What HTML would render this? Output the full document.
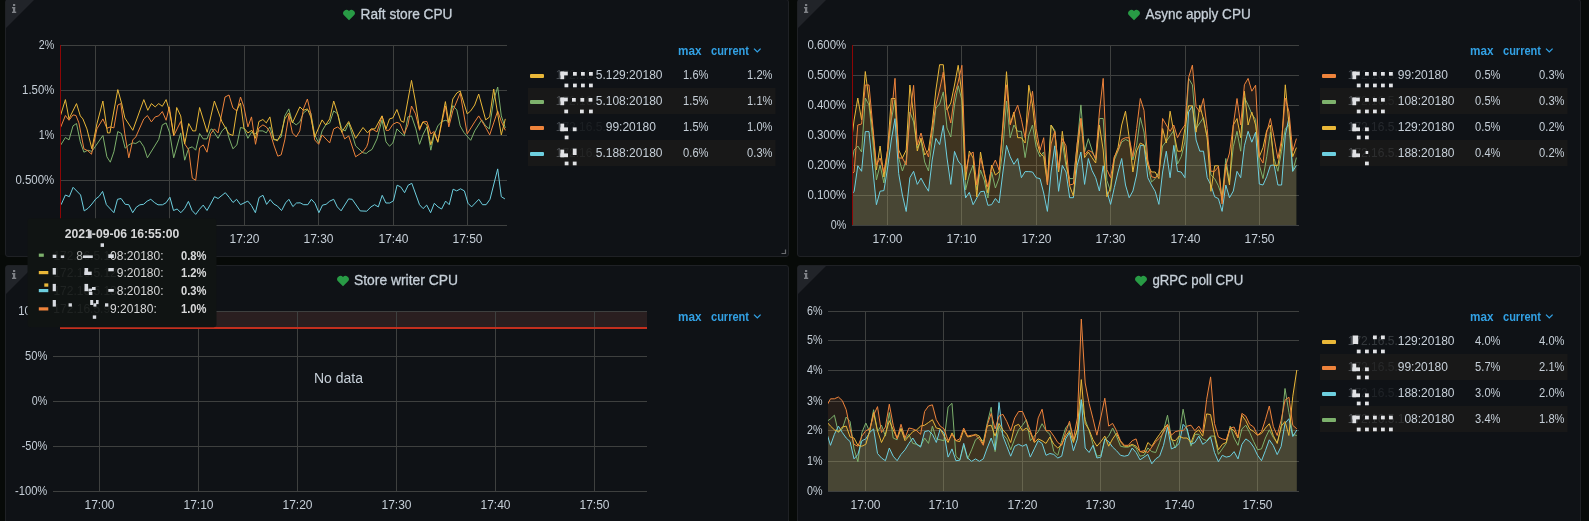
<!DOCTYPE html>
<html><head><meta charset="utf-8"><title>TiKV CPU</title>
<style>
html,body{margin:0;padding:0;background:#080b09;overflow:hidden}
svg{display:block;font-family:"Liberation Sans",sans-serif;will-change:transform;opacity:.999}
</style></head><body>
<svg width="1589" height="521" viewBox="0 0 1589 521">
<defs><clipPath id="cl1"><rect x="60" y="40" width="447" height="186"/></clipPath><clipPath id="cl2"><rect x="852" y="40" width="447" height="185"/></clipPath><clipPath id="cl4"><rect x="828" y="306" width="471" height="185"/></clipPath></defs>
<rect width="1589" height="521" fill="#080b09"/>
<rect x="5.5" y="-0.5" width="783" height="257" rx="2.5" fill="#101317" stroke="#202226"/>
<path d="M6 0h28l-28 28z" fill="#22252a"/>
<g fill="#7e8186"><rect x="13" y="4" width="2.2" height="2"/><rect x="12" y="7" width="3.2" height="1.4"/><rect x="13" y="7" width="2.2" height="5"/><rect x="12" y="11.6" width="4.2" height="1.4"/></g>
<rect x="797.5" y="-0.5" width="783" height="257" rx="2.5" fill="#101317" stroke="#202226"/>
<path d="M798 0h28l-28 28z" fill="#22252a"/>
<g fill="#7e8186"><rect x="805" y="4" width="2.2" height="2"/><rect x="804" y="7" width="3.2" height="1.4"/><rect x="805" y="7" width="2.2" height="5"/><rect x="804" y="11.6" width="4.2" height="1.4"/></g>
<rect x="5.5" y="265.5" width="783" height="269" rx="2.5" fill="#101317" stroke="#202226"/>
<path d="M6 266h28l-28 28z" fill="#22252a"/>
<g fill="#7e8186"><rect x="13" y="270" width="2.2" height="2"/><rect x="12" y="273" width="3.2" height="1.4"/><rect x="13" y="273" width="2.2" height="5"/><rect x="12" y="277.6" width="4.2" height="1.4"/></g>
<rect x="797.5" y="265.5" width="783" height="269" rx="2.5" fill="#101317" stroke="#202226"/>
<path d="M798 266h28l-28 28z" fill="#22252a"/>
<g fill="#7e8186"><rect x="805" y="270" width="2.2" height="2"/><rect x="804" y="273" width="3.2" height="1.4"/><rect x="805" y="273" width="2.2" height="5"/><rect x="804" y="277.6" width="4.2" height="1.4"/></g>
<path transform="translate(343,10)" d="M6 10.2 L1 5.3 A3.25 3.25 0 0 1 6 1.0 A3.25 3.25 0 0 1 11 5.3 Z" fill="#299c46"/>
<text x="360.5" y="19.2" font-size="14" font-weight="400" fill="#c7d0d9" textLength="92" lengthAdjust="spacingAndGlyphs" stroke="#c7d0d9" stroke-width="0.3">Raft store CPU</text>
<rect x="95" y="45" width="1" height="181" fill="#3f4140"/>
<rect x="169" y="45" width="1" height="181" fill="#3f4140"/>
<rect x="244" y="45" width="1" height="181" fill="#3f4140"/>
<rect x="318" y="45" width="1" height="181" fill="#3f4140"/>
<rect x="393" y="45" width="1" height="181" fill="#3f4140"/>
<rect x="467" y="45" width="1" height="181" fill="#3f4140"/>
<rect x="60" y="45" width="447" height="1" fill="#3f4140"/>
<rect x="60" y="90" width="447" height="1" fill="#3f4140"/>
<rect x="60" y="135" width="447" height="1" fill="#3f4140"/>
<rect x="60" y="180" width="447" height="1" fill="#3f4140"/>
<rect x="60" y="225" width="447" height="1" fill="#3f4140"/>
<text x="54.3" y="48.9" font-size="12" text-anchor="end" fill="#c7d0d9" textLength="15.5" lengthAdjust="spacingAndGlyphs">2%</text>
<text x="54.3" y="93.9" font-size="12" text-anchor="end" fill="#c7d0d9" textLength="32.2" lengthAdjust="spacingAndGlyphs">1.50%</text>
<text x="54.3" y="138.9" font-size="12" text-anchor="end" fill="#c7d0d9" textLength="15.5" lengthAdjust="spacingAndGlyphs">1%</text>
<text x="54.3" y="183.9" font-size="12" text-anchor="end" fill="#c7d0d9" textLength="38.9" lengthAdjust="spacingAndGlyphs">0.500%</text>
<text x="95.5" y="242.6" font-size="12" text-anchor="middle" fill="#c7d0d9">17:00</text>
<text x="169.5" y="242.6" font-size="12" text-anchor="middle" fill="#c7d0d9">17:10</text>
<text x="244.5" y="242.6" font-size="12" text-anchor="middle" fill="#c7d0d9">17:20</text>
<text x="318.5" y="242.6" font-size="12" text-anchor="middle" fill="#c7d0d9">17:30</text>
<text x="393.5" y="242.6" font-size="12" text-anchor="middle" fill="#c7d0d9">17:40</text>
<text x="467.5" y="242.6" font-size="12" text-anchor="middle" fill="#c7d0d9">17:50</text>
<g clip-path="url(#cl1)"><path d="M60.4 145.5 L65.4 137.5 L69.0 139.9 L73.0 125.9 L76.5 123.5 L80.3 141.9 L83.9 152.2 L87.9 150.2 L91.9 151.4 L102.9 135.5 L106.9 156.8 L110.3 162.2 L113.9 151.8 L117.8 131.5 L121.4 133.5 L125.2 148.2 L128.8 144.9 L132.8 142.9 L135.8 143.5 L139.8 140.9 L143.8 146.8 L147.4 157.8 L158.7 139.5 L162.3 124.9 L166.1 122.9 L169.7 132.9 L173.7 157.8 L180.7 132.9 L184.7 160.2 L188.7 148.2 L192.3 146.8 L195.7 150.2 L199.6 133.5 L203.2 138.9 L207.0 138.9 L210.6 129.5 L212.0 128.9 L218.0 138.3 L222.0 130.9 L226.0 126.9 L229.0 137.9 L232.9 148.8 L236.9 144.9 L240.5 127.5 L243.9 128.3 L247.9 138.3 L251.5 132.3 L254.9 133.9 L258.9 130.9 L262.9 130.9 L266.3 132.9 L269.9 126.9 L273.8 139.9 L277.4 139.5 L281.2 136.9 L284.8 115.9 L288.8 108.9 L292.4 121.9 L296.2 124.9 L299.8 121.9 L303.4 112.9 L307.4 109.9 L310.8 112.9 L314.7 134.9 L318.7 142.9 L322.1 130.9 L325.7 124.9 L329.7 122.9 L333.7 110.9 L337.7 113.9 L341.7 128.9 L345.3 130.9 L348.7 122.9 L355.6 145.9 L363.0 152.8 L366.6 153.4 L368.0 151.8 L372.0 149.4 L377.0 138.9 L382.0 119.9 L386.0 141.9 L389.5 146.2 L392.9 142.9 L396.9 128.9 L400.9 132.9 L404.3 135.9 L407.9 116.9 L411.5 115.9 L415.9 128.9 L419.5 144.3 L422.9 134.9 L426.9 126.9 L430.8 150.2 L434.2 134.9 L437.8 125.9 L441.8 121.5 L445.4 120.3 L448.8 121.5 L452.8 105.6 L456.8 109.9 L460.2 125.9 L463.8 132.3 L470.7 140.3 L474.7 130.9 L481.7 119.9 L485.7 125.9 L489.3 128.9 L493.7 100.0 L497.7 87.0 L501.3 115.9 L505.3 127.9" fill="none" stroke="#7eb26d" stroke-width="1.0" stroke-linejoin="round"/>
<path d="M61.1 204.7 L65.4 195.0 L69.3 196.7 L73.1 187.3 L80.6 195.0 L84.2 210.9 L88.1 208.3 L91.9 204.0 L95.8 198.9 L99.1 196.4 L102.6 191.4 L106.4 204.7 L113.9 212.7 L117.5 199.3 L121.1 198.5 L125.2 204.3 L128.8 204.7 L132.7 212.7 L136.3 207.2 L139.9 204.8 L143.6 204.3 L147.2 201.1 L150.8 199.3 L154.4 202.5 L158.0 204.8 L162.4 204.8 L166.0 202.8 L169.9 197.2 L173.5 210.5 L177.1 209.0 L180.9 212.7 L184.8 208.3 L188.4 201.4 L192.1 210.5 L195.7 214.4 L199.3 209.5 L203.2 205.1 L207.0 210.5 L210.6 204.0 L214.5 196.7 L218.1 198.5 L225.3 192.7 L229.3 197.5 L233.0 202.5 L236.6 199.3 L240.5 204.7 L247.8 201.1 L251.4 205.4 L255.4 212.7 L259.1 197.5 L263.0 195.3 L266.6 204.4 L270.2 199.6 L273.8 204.0 L277.5 206.1 L281.5 210.5 L282.0 209.8 L285.6 202.8 L288.9 199.3 L292.9 206.6 L296.5 203.0 L300.1 202.8 L303.7 204.7 L307.8 204.7 L311.4 199.3 L315.0 203.3 L318.9 212.7 L322.5 205.1 L326.1 204.3 L329.8 201.1 L333.7 199.3 L337.3 206.9 L341.1 210.8 L348.6 198.9 L352.2 199.3 L360.2 210.9 L366.7 211.2 L371.0 206.9 L374.6 204.7 L378.3 206.9 L382.2 195.3 L385.9 203.0 L389.8 203.0 L393.4 200.8 L397.1 185.2 L400.7 186.9 L404.6 192.7 L408.2 185.2 L411.8 183.3 L419.5 204.7 L423.1 208.6 L426.7 205.1 L430.6 212.7 L434.3 203.3 L438.0 206.9 L441.6 209.0 L445.6 201.1 L449.2 204.7 L453.1 189.2 L456.7 190.9 L460.5 188.8 L464.4 190.9 L468.0 203.3 L471.6 206.9 L478.8 199.3 L482.5 204.7 L486.1 204.7 L490.0 199.3 L497.7 168.9 L501.3 196.7 L504.9 198.9" fill="none" stroke="#6ed0e0" stroke-width="1.0" stroke-linejoin="round"/>
<path d="M60.4 127.9 L65.4 115.5 L69.0 120.3 L73.0 114.9 L76.0 115.5 L78.9 122.9 L83.9 148.8 L87.9 150.8 L91.5 154.2 L96.9 128.9 L102.9 118.9 L106.9 128.3 L110.3 126.9 L113.9 127.9 L117.8 105.0 L120.8 103.6 L124.8 133.9 L128.8 157.8 L132.8 139.9 L135.8 136.9 L143.8 118.9 L147.4 115.5 L151.4 121.9 L155.2 116.9 L158.7 115.9 L162.3 111.5 L166.1 120.3 L169.3 106.9 L173.7 135.9 L177.1 128.9 L180.7 121.5 L184.7 143.9 L188.7 149.8 L192.3 178.2 L195.7 180.2 L199.6 147.8 L203.2 144.9 L207.0 152.2 L210.6 133.9 L214.4 128.9 L218.0 132.9 L225.0 97.0 L229.0 95.0 L232.9 107.9 L236.9 110.9 L240.5 97.0 L243.9 106.9 L247.9 126.9 L251.5 116.9 L255.5 144.3 L258.9 127.9 L262.9 124.9 L266.3 126.9 L269.9 131.9 L273.8 144.9 L277.8 156.2 L281.2 154.8 L284.8 139.9 L288.8 115.5 L292.4 132.9 L296.2 136.9 L299.8 130.9 L303.4 108.9 L307.4 99.0 L310.8 113.9 L314.7 139.9 L318.7 144.3 L322.1 134.9 L329.7 142.9 L333.7 128.9 L337.7 126.9 L341.7 130.9 L344.7 138.9 L348.7 135.9 L355.6 156.8 L363.0 151.8 L366.6 146.8 L368.0 142.9 L370.0 130.3 L373.0 129.5 L377.0 131.9 L382.0 115.9 L386.0 130.3 L388.9 130.3 L392.9 124.3 L396.9 122.3 L399.9 123.5 L404.3 133.9 L407.9 124.9 L411.5 106.0 L415.5 113.9 L419.5 130.3 L422.9 121.9 L426.9 121.5 L430.8 133.9 L434.2 131.5 L437.8 141.9 L445.4 106.0 L448.8 126.9 L452.8 110.9 L460.2 93.0 L467.2 133.9 L474.7 121.9 L478.7 115.9 L485.7 127.5 L489.7 134.9 L493.7 122.9 L497.7 110.9 L501.3 121.5 L505.3 130.3" fill="none" stroke="#ef843c" stroke-width="1.0" stroke-linejoin="round"/>
<path d="M60.4 115.9 L65.4 99.6 L69.0 118.9 L76.5 103.6 L80.3 115.9 L82.9 118.9 L86.9 128.9 L91.9 148.8 L96.9 123.9 L102.9 101.0 L107.5 132.9 L109.9 132.9 L117.8 89.6 L121.8 104.0 L124.8 117.9 L132.8 130.3 L143.8 99.6 L147.8 110.3 L151.4 103.6 L155.2 106.9 L158.7 103.6 L162.3 106.3 L166.1 99.6 L169.7 111.9 L173.7 134.9 L176.7 107.5 L180.7 115.9 L184.7 143.9 L188.7 123.5 L192.7 130.9 L195.7 130.9 L199.6 107.5 L207.2 132.3 L214.4 101.0 L222.0 121.9 L229.0 133.9 L232.9 135.5 L236.9 109.9 L240.5 103.0 L243.9 127.9 L247.9 132.9 L251.9 130.3 L255.5 138.3 L258.9 121.5 L262.9 119.5 L266.3 122.9 L269.9 116.9 L273.8 138.9 L277.4 140.9 L281.2 133.5 L284.8 118.9 L288.8 112.9 L292.4 122.9 L299.8 106.9 L303.4 110.3 L307.4 108.9 L310.8 116.9 L314.7 136.9 L322.1 119.9 L325.7 124.9 L329.7 118.9 L333.7 101.0 L337.7 113.9 L341.7 132.3 L348.7 121.5 L355.6 138.3 L363.0 127.5 L367.6 132.9 L368.0 132.3 L371.0 128.9 L375.0 128.9 L382.0 115.9 L386.0 128.9 L389.5 118.9 L392.9 117.9 L396.9 109.5 L400.9 120.9 L403.9 122.3 L411.5 80.4 L415.5 102.0 L419.5 128.9 L422.9 121.9 L426.9 124.9 L430.8 144.9 L434.2 132.9 L437.8 142.3 L445.4 101.6 L448.8 122.9 L452.8 99.0 L456.8 93.0 L460.2 91.0 L467.2 113.9 L470.7 110.9 L474.7 105.0 L478.7 94.0 L485.7 119.9 L489.7 116.9 L493.7 89.0 L497.7 113.9 L501.3 134.9 L505.3 118.9" fill="none" stroke="#eab839" stroke-width="1.0" stroke-linejoin="round"/></g>
<rect x="60" y="45" width="1" height="180" fill="#8e0606"/>
<text x="678" y="55.1" font-size="12" font-weight="700" fill="#33a2e5" textLength="23.5" lengthAdjust="spacingAndGlyphs">max</text>
<text x="711" y="55.1" font-size="12" font-weight="700" fill="#33a2e5" textLength="38" lengthAdjust="spacingAndGlyphs">current</text>
<path d="M754 48.6l3.3 3.3l3.3-3.3" fill="none" stroke="#33a2e5" stroke-width="1.3"/>
<rect x="530" y="74" width="14" height="4" rx="1" fill="#eab839"/>
<text x="555.7" y="79.3" font-size="12" fill="#c7d0d9"><tspan fill-opacity="0.3">1</tspan><tspan fill-opacity="0.07">72.16.</tspan>5.129:20180</text>
<text x="708.5" y="79.3" font-size="12" text-anchor="end" fill="#c7d0d9" textLength="25.4" lengthAdjust="spacingAndGlyphs">1.6%</text>
<text x="772.5" y="79.3" font-size="12" text-anchor="end" fill="#c7d0d9" textLength="25.4" lengthAdjust="spacingAndGlyphs">1.2%</text>
<rect x="528" y="88" width="247.5" height="26" fill="#191919"/>
<rect x="530" y="100" width="14" height="4" rx="1" fill="#7eb26d"/>
<text x="555.7" y="105.3" font-size="12" fill="#c7d0d9"><tspan fill-opacity="0.3">1</tspan><tspan fill-opacity="0.07">72.16.</tspan>5.108:20180</text>
<text x="708.5" y="105.3" font-size="12" text-anchor="end" fill="#c7d0d9" textLength="25.4" lengthAdjust="spacingAndGlyphs">1.5%</text>
<text x="772.5" y="105.3" font-size="12" text-anchor="end" fill="#c7d0d9" textLength="25.4" lengthAdjust="spacingAndGlyphs">1.1%</text>
<rect x="530" y="126" width="14" height="4" rx="1" fill="#ef843c"/>
<text x="555.7" y="131.3" font-size="12" fill="#c7d0d9"><tspan fill-opacity="0.3">1</tspan><tspan fill-opacity="0.07">72.16.5.</tspan>99:20180</text>
<text x="708.5" y="131.3" font-size="12" text-anchor="end" fill="#c7d0d9" textLength="25.4" lengthAdjust="spacingAndGlyphs">1.5%</text>
<text x="772.5" y="131.3" font-size="12" text-anchor="end" fill="#c7d0d9" textLength="25.4" lengthAdjust="spacingAndGlyphs">1.0%</text>
<rect x="528" y="140" width="247.5" height="26" fill="#191919"/>
<rect x="530" y="152" width="14" height="4" rx="1" fill="#6ed0e0"/>
<text x="555.7" y="157.3" font-size="12" fill="#c7d0d9"><tspan fill-opacity="0.3">1</tspan><tspan fill-opacity="0.07">72.16.</tspan>5.188:20180</text>
<text x="708.5" y="157.3" font-size="12" text-anchor="end" fill="#c7d0d9" textLength="25.4" lengthAdjust="spacingAndGlyphs">0.6%</text>
<text x="772.5" y="157.3" font-size="12" text-anchor="end" fill="#c7d0d9" textLength="25.4" lengthAdjust="spacingAndGlyphs">0.3%</text>
<path d="M781.5 253.5h4v-4" fill="none" stroke="#6b6d70" stroke-width="1.2"/>
<path transform="translate(1128,10)" d="M6 10.2 L1 5.3 A3.25 3.25 0 0 1 6 1.0 A3.25 3.25 0 0 1 11 5.3 Z" fill="#299c46"/>
<text x="1145.4" y="19.2" font-size="14" font-weight="400" fill="#c7d0d9" textLength="105.3" lengthAdjust="spacingAndGlyphs" stroke="#c7d0d9" stroke-width="0.3">Async apply CPU</text>
<rect x="887" y="45" width="1" height="181" fill="#3f4140"/>
<rect x="961" y="45" width="1" height="181" fill="#3f4140"/>
<rect x="1036" y="45" width="1" height="181" fill="#3f4140"/>
<rect x="1110" y="45" width="1" height="181" fill="#3f4140"/>
<rect x="1185" y="45" width="1" height="181" fill="#3f4140"/>
<rect x="1259" y="45" width="1" height="181" fill="#3f4140"/>
<rect x="852" y="45" width="447" height="1" fill="#3f4140"/>
<rect x="852" y="75" width="447" height="1" fill="#3f4140"/>
<rect x="852" y="105" width="447" height="1" fill="#3f4140"/>
<rect x="852" y="135" width="447" height="1" fill="#3f4140"/>
<rect x="852" y="165" width="447" height="1" fill="#3f4140"/>
<rect x="852" y="195" width="447" height="1" fill="#3f4140"/>
<rect x="852" y="225" width="447" height="1" fill="#3f4140"/>
<text x="846.3" y="48.9" font-size="12" text-anchor="end" fill="#c7d0d9" textLength="38.9" lengthAdjust="spacingAndGlyphs">0.600%</text>
<text x="846.3" y="78.9" font-size="12" text-anchor="end" fill="#c7d0d9" textLength="38.9" lengthAdjust="spacingAndGlyphs">0.500%</text>
<text x="846.3" y="108.9" font-size="12" text-anchor="end" fill="#c7d0d9" textLength="38.9" lengthAdjust="spacingAndGlyphs">0.400%</text>
<text x="846.3" y="138.9" font-size="12" text-anchor="end" fill="#c7d0d9" textLength="38.9" lengthAdjust="spacingAndGlyphs">0.300%</text>
<text x="846.3" y="168.9" font-size="12" text-anchor="end" fill="#c7d0d9" textLength="38.9" lengthAdjust="spacingAndGlyphs">0.200%</text>
<text x="846.3" y="198.9" font-size="12" text-anchor="end" fill="#c7d0d9" textLength="38.9" lengthAdjust="spacingAndGlyphs">0.100%</text>
<text x="846.3" y="228.9" font-size="12" text-anchor="end" fill="#c7d0d9" textLength="15.5" lengthAdjust="spacingAndGlyphs">0%</text>
<text x="887.5" y="242.6" font-size="12" text-anchor="middle" fill="#c7d0d9">17:00</text>
<text x="961.5" y="242.6" font-size="12" text-anchor="middle" fill="#c7d0d9">17:10</text>
<text x="1036.5" y="242.6" font-size="12" text-anchor="middle" fill="#c7d0d9">17:20</text>
<text x="1110.5" y="242.6" font-size="12" text-anchor="middle" fill="#c7d0d9">17:30</text>
<text x="1185.5" y="242.6" font-size="12" text-anchor="middle" fill="#c7d0d9">17:40</text>
<text x="1259.5" y="242.6" font-size="12" text-anchor="middle" fill="#c7d0d9">17:50</text>
<g clip-path="url(#cl2)"><path d="M850.4 195 L854.1 191.7 L857.8 165.7 L861.6 171.3 L865.3 131.6 L869.0 131.6 L872.7 168 L876.4 204.7 L880.1 191.2 L883.9 190.6 L887.6 168 L891.3 140 L895.0 118.6 L898.7 173.6 L902.4 195 L906.2 211.5 L909.9 177.6 L913.6 171.3 L917.3 184.4 L921.0 178.1 L924.7 185 L928.5 191.2 L932.2 160 L935.9 138.4 L939.6 144.6 L943.3 125.4 L947.0 158 L950.8 184.4 L954.5 151.4 L958.2 161 L961.9 165.7 L965.6 197.9 L969.3 192.3 L973.1 204.7 L976.8 198 L980.5 191.7 L984.2 191.2 L987.9 205.3 L991.6 204.7 L995.4 198.5 L999.1 203 L1002.8 173 L1006.5 145.4 L1010.2 156.7 L1013.9 164.3 L1017.7 158.5 L1021.4 177.7 L1025.1 171.6 L1028.8 171.6 L1032.5 172 L1036.2 177.7 L1040.0 178.6 L1043.7 193 L1047.4 211.4 L1051.1 172 L1054.8 145.8 L1058.6 191.3 L1062.3 165.4 L1066.0 172 L1069.7 197.7 L1073.4 197.7 L1077.1 165.8 L1080.9 152 L1084.6 184.4 L1088.3 158.5 L1092.0 170.4 L1095.7 177.7 L1099.4 191 L1103.2 165.8 L1106.9 191 L1110.6 204.4 L1114.3 187.7 L1118.0 172 L1121.7 158.5 L1125.5 185 L1129.2 197.7 L1132.9 191 L1136.6 175 L1140.3 145.4 L1144.0 145.4 L1147.8 177.7 L1151.5 185 L1155.2 191.3 L1158.9 204.4 L1162.6 172 L1166.3 151.2 L1170.1 177.7 L1173.8 145.4 L1177.5 171.3 L1181.2 172 L1184.9 177.7 L1188.6 112 L1192.4 105.8 L1196.1 140 L1199.8 151.2 L1203.5 151.2 L1207.2 177.7 L1210.9 185 L1214.7 196.8 L1218.4 198.6 L1222.1 211.4 L1225.8 185 L1229.5 197.7 L1233.3 191 L1237.0 171.3 L1240.7 177.7 L1244.4 145.8 L1248.1 131.3 L1251.8 142.2 L1255.6 132.2 L1259.3 184 L1263.0 185 L1266.7 176.7 L1270.4 165.4 L1274.1 165 L1277.9 185 L1281.6 185 L1285.3 135 L1289.0 117.6 L1292.7 171.3 L1296.4 165.4 L1296.4 225.5 L850.4 225.5 Z" fill="#6ed0e0" fill-opacity="0.13" stroke="none"/>
<path d="M850.4 170 L854.1 150 L857.8 146 L861.6 152 L865.3 98 L869.0 105 L872.7 140 L876.4 180 L880.1 165 L883.9 183 L887.6 155 L891.3 120 L895.0 100 L898.7 158 L902.4 171 L906.2 160 L909.9 112 L913.6 122 L917.3 148 L921.0 140 L924.7 162 L928.5 171 L932.2 140 L935.9 108 L939.6 104 L943.3 91.9 L947.0 128 L950.8 137 L954.5 105 L958.2 85.7 L961.9 100 L965.6 190 L969.3 175 L973.1 165 L976.8 190 L980.5 170 L984.2 180 L987.9 198 L991.6 172 L995.4 188 L999.1 178 L1002.8 150 L1006.5 101 L1010.2 137.7 L1013.9 125 L1017.7 131.3 L1021.4 131.3 L1025.1 157.6 L1028.8 135 L1032.5 125 L1036.2 147.6 L1040.0 156.7 L1043.7 152 L1047.4 182 L1051.1 125 L1054.8 130.4 L1058.6 171.3 L1062.3 142 L1066.0 165.8 L1069.7 178.6 L1073.4 178.6 L1077.1 145.8 L1080.9 104.9 L1084.6 152 L1088.3 138.6 L1092.0 150 L1095.7 160 L1099.4 118.5 L1103.2 118.5 L1106.9 180.4 L1110.6 191.3 L1114.3 160 L1118.0 151 L1121.7 142 L1125.5 139.5 L1129.2 141.3 L1132.9 160 L1136.6 145.8 L1140.3 117.6 L1144.0 132 L1147.8 165 L1151.5 182 L1155.2 178.6 L1158.9 172 L1162.6 146 L1166.3 141.3 L1170.1 135.8 L1173.8 130.4 L1177.5 164 L1181.2 156.7 L1184.9 142 L1188.6 78.4 L1192.4 84.8 L1196.1 128.5 L1199.8 123 L1203.5 117.6 L1207.2 137.7 L1210.9 175 L1214.7 178.6 L1218.4 185.9 L1222.1 196.8 L1225.8 158.5 L1229.5 182 L1233.3 146.8 L1237.0 131.3 L1240.7 151.2 L1244.4 97.6 L1248.1 104.9 L1251.8 114 L1255.6 119.4 L1259.3 165 L1263.0 178.6 L1266.7 156.7 L1270.4 132.2 L1274.1 158.5 L1277.9 171.3 L1281.6 151.2 L1285.3 128.5 L1289.0 125 L1292.7 171.3 L1296.4 157.6 L1296.4 225.5 L850.4 225.5 Z" fill="#7eb26d" fill-opacity="0.07" stroke="none"/>
<path d="M850.4 150 L854.1 120 L857.8 98 L861.6 120 L865.3 71.5 L869.0 100 L872.7 130 L876.4 170 L880.1 146 L883.9 177 L887.6 150 L891.3 98.5 L895.0 98.5 L898.7 150 L902.4 158 L906.2 150 L909.9 85 L913.6 115 L917.3 151 L921.0 138 L924.7 155 L928.5 150 L932.2 125 L935.9 90 L939.6 64.7 L943.3 64.7 L947.0 110 L950.8 103 L954.5 85 L958.2 65.3 L961.9 94 L965.6 180 L969.3 151 L973.1 158 L976.8 197 L980.5 152 L984.2 173 L987.9 193 L991.6 165 L995.4 175 L999.1 172 L1002.8 125 L1006.5 71.7 L1010.2 124 L1013.9 112 L1017.7 137.7 L1021.4 137.7 L1025.1 143 L1028.8 85.2 L1032.5 105 L1036.2 139.5 L1040.0 153 L1043.7 156.7 L1047.4 184 L1051.1 125 L1054.8 132 L1058.6 172 L1062.3 131.3 L1066.0 160 L1069.7 186 L1073.4 196 L1077.1 155 L1080.9 118.5 L1084.6 157.6 L1088.3 152 L1092.0 157.6 L1095.7 163 L1099.4 125 L1103.2 150 L1106.9 196.8 L1110.6 187.7 L1114.3 157.6 L1118.0 147.6 L1121.7 125 L1125.5 111.2 L1129.2 137.7 L1132.9 172 L1136.6 151 L1140.3 143 L1144.0 145 L1147.8 165 L1151.5 172 L1155.2 172 L1158.9 178.6 L1162.6 128.5 L1166.3 143 L1170.1 111.2 L1173.8 132.2 L1177.5 151.2 L1181.2 151.2 L1184.9 128.5 L1188.6 105.8 L1192.4 105.8 L1196.1 132.2 L1199.8 105.2 L1203.5 119.4 L1207.2 137.7 L1210.9 191.3 L1214.7 165.8 L1218.4 165.8 L1222.1 200.4 L1225.8 164 L1229.5 185 L1233.3 125 L1237.0 118.5 L1240.7 137.7 L1244.4 91.2 L1248.1 125 L1251.8 112 L1255.6 125 L1259.3 156.7 L1263.0 147.6 L1266.7 130.4 L1270.4 125 L1274.1 165.4 L1277.9 165.4 L1281.6 144 L1285.3 84.8 L1289.0 125 L1292.7 156.7 L1296.4 147.6 L1296.4 225.5 L850.4 225.5 Z" fill="#eab839" fill-opacity="0.105" stroke="none"/>
<path d="M850.4 175 L854.1 172 L857.8 125 L861.6 124 L865.3 85 L869.0 85 L872.7 125 L876.4 165 L880.1 158 L883.9 172 L887.6 150 L891.3 115 L895.0 78.3 L898.7 158 L902.4 158 L906.2 165 L909.9 115 L913.6 85.3 L917.3 145 L921.0 133 L924.7 147 L928.5 157 L932.2 130 L935.9 105 L939.6 90 L943.3 72.1 L947.0 108 L950.8 123 L954.5 95 L958.2 82 L961.9 65.3 L965.6 172 L969.3 155 L973.1 152 L976.8 185 L980.5 158 L984.2 172 L987.9 187 L991.6 168 L995.4 160 L999.1 170 L1002.8 130 L1006.5 84.8 L1010.2 125 L1013.9 114 L1017.7 105.2 L1021.4 119.4 L1025.1 137.7 L1028.8 112 L1032.5 91.2 L1036.2 128.5 L1040.0 150.3 L1043.7 137.7 L1047.4 185 L1051.1 144 L1054.8 131.3 L1058.6 169.5 L1062.3 138.5 L1066.0 145.8 L1069.7 185 L1073.4 184 L1077.1 144 L1080.9 118.5 L1084.6 154.9 L1088.3 150.3 L1092.0 152 L1095.7 158.5 L1099.4 112 L1103.2 78.4 L1106.9 169.5 L1110.6 177.7 L1114.3 156.7 L1118.0 150.3 L1121.7 139.5 L1125.5 137.7 L1129.2 137.7 L1132.9 156.7 L1136.6 128.5 L1140.3 98.5 L1144.0 110.3 L1147.8 160 L1151.5 176.7 L1155.2 177.7 L1158.9 175 L1162.6 118.5 L1166.3 125 L1170.1 131.3 L1173.8 125 L1177.5 137.7 L1181.2 130.4 L1184.9 125 L1188.6 77.5 L1192.4 65.1 L1196.1 106.7 L1199.8 112 L1203.5 98.5 L1207.2 128.5 L1210.9 171.3 L1214.7 171.3 L1218.4 166.7 L1222.1 204 L1225.8 165.8 L1229.5 153 L1233.3 125 L1237.0 98.5 L1240.7 125 L1244.4 84.8 L1248.1 78.4 L1251.8 91.2 L1255.6 85.2 L1259.3 156.7 L1263.0 163 L1266.7 132.2 L1270.4 118.5 L1274.1 137.7 L1277.9 158.5 L1281.6 139.5 L1285.3 98 L1289.0 112 L1292.7 151.2 L1296.4 138.6 L1296.4 225.5 L850.4 225.5 Z" fill="#ef843c" fill-opacity="0.1" stroke="none"/>
<path d="M850.4 170 L854.1 150 L857.8 146 L861.6 152 L865.3 98 L869.0 105 L872.7 140 L876.4 180 L880.1 165 L883.9 183 L887.6 155 L891.3 120 L895.0 100 L898.7 158 L902.4 171 L906.2 160 L909.9 112 L913.6 122 L917.3 148 L921.0 140 L924.7 162 L928.5 171 L932.2 140 L935.9 108 L939.6 104 L943.3 91.9 L947.0 128 L950.8 137 L954.5 105 L958.2 85.7 L961.9 100 L965.6 190 L969.3 175 L973.1 165 L976.8 190 L980.5 170 L984.2 180 L987.9 198 L991.6 172 L995.4 188 L999.1 178 L1002.8 150 L1006.5 101 L1010.2 137.7 L1013.9 125 L1017.7 131.3 L1021.4 131.3 L1025.1 157.6 L1028.8 135 L1032.5 125 L1036.2 147.6 L1040.0 156.7 L1043.7 152 L1047.4 182 L1051.1 125 L1054.8 130.4 L1058.6 171.3 L1062.3 142 L1066.0 165.8 L1069.7 178.6 L1073.4 178.6 L1077.1 145.8 L1080.9 104.9 L1084.6 152 L1088.3 138.6 L1092.0 150 L1095.7 160 L1099.4 118.5 L1103.2 118.5 L1106.9 180.4 L1110.6 191.3 L1114.3 160 L1118.0 151 L1121.7 142 L1125.5 139.5 L1129.2 141.3 L1132.9 160 L1136.6 145.8 L1140.3 117.6 L1144.0 132 L1147.8 165 L1151.5 182 L1155.2 178.6 L1158.9 172 L1162.6 146 L1166.3 141.3 L1170.1 135.8 L1173.8 130.4 L1177.5 164 L1181.2 156.7 L1184.9 142 L1188.6 78.4 L1192.4 84.8 L1196.1 128.5 L1199.8 123 L1203.5 117.6 L1207.2 137.7 L1210.9 175 L1214.7 178.6 L1218.4 185.9 L1222.1 196.8 L1225.8 158.5 L1229.5 182 L1233.3 146.8 L1237.0 131.3 L1240.7 151.2 L1244.4 97.6 L1248.1 104.9 L1251.8 114 L1255.6 119.4 L1259.3 165 L1263.0 178.6 L1266.7 156.7 L1270.4 132.2 L1274.1 158.5 L1277.9 171.3 L1281.6 151.2 L1285.3 128.5 L1289.0 125 L1292.7 171.3 L1296.4 157.6" fill="none" stroke="#7eb26d" stroke-width="1.0" stroke-linejoin="round"/>
<path d="M850.4 195 L854.1 191.7 L857.8 165.7 L861.6 171.3 L865.3 131.6 L869.0 131.6 L872.7 168 L876.4 204.7 L880.1 191.2 L883.9 190.6 L887.6 168 L891.3 140 L895.0 118.6 L898.7 173.6 L902.4 195 L906.2 211.5 L909.9 177.6 L913.6 171.3 L917.3 184.4 L921.0 178.1 L924.7 185 L928.5 191.2 L932.2 160 L935.9 138.4 L939.6 144.6 L943.3 125.4 L947.0 158 L950.8 184.4 L954.5 151.4 L958.2 161 L961.9 165.7 L965.6 197.9 L969.3 192.3 L973.1 204.7 L976.8 198 L980.5 191.7 L984.2 191.2 L987.9 205.3 L991.6 204.7 L995.4 198.5 L999.1 203 L1002.8 173 L1006.5 145.4 L1010.2 156.7 L1013.9 164.3 L1017.7 158.5 L1021.4 177.7 L1025.1 171.6 L1028.8 171.6 L1032.5 172 L1036.2 177.7 L1040.0 178.6 L1043.7 193 L1047.4 211.4 L1051.1 172 L1054.8 145.8 L1058.6 191.3 L1062.3 165.4 L1066.0 172 L1069.7 197.7 L1073.4 197.7 L1077.1 165.8 L1080.9 152 L1084.6 184.4 L1088.3 158.5 L1092.0 170.4 L1095.7 177.7 L1099.4 191 L1103.2 165.8 L1106.9 191 L1110.6 204.4 L1114.3 187.7 L1118.0 172 L1121.7 158.5 L1125.5 185 L1129.2 197.7 L1132.9 191 L1136.6 175 L1140.3 145.4 L1144.0 145.4 L1147.8 177.7 L1151.5 185 L1155.2 191.3 L1158.9 204.4 L1162.6 172 L1166.3 151.2 L1170.1 177.7 L1173.8 145.4 L1177.5 171.3 L1181.2 172 L1184.9 177.7 L1188.6 112 L1192.4 105.8 L1196.1 140 L1199.8 151.2 L1203.5 151.2 L1207.2 177.7 L1210.9 185 L1214.7 196.8 L1218.4 198.6 L1222.1 211.4 L1225.8 185 L1229.5 197.7 L1233.3 191 L1237.0 171.3 L1240.7 177.7 L1244.4 145.8 L1248.1 131.3 L1251.8 142.2 L1255.6 132.2 L1259.3 184 L1263.0 185 L1266.7 176.7 L1270.4 165.4 L1274.1 165 L1277.9 185 L1281.6 185 L1285.3 135 L1289.0 117.6 L1292.7 171.3 L1296.4 165.4" fill="none" stroke="#6ed0e0" stroke-width="1.0" stroke-linejoin="round"/>
<path d="M850.4 150 L854.1 120 L857.8 98 L861.6 120 L865.3 71.5 L869.0 100 L872.7 130 L876.4 170 L880.1 146 L883.9 177 L887.6 150 L891.3 98.5 L895.0 98.5 L898.7 150 L902.4 158 L906.2 150 L909.9 85 L913.6 115 L917.3 151 L921.0 138 L924.7 155 L928.5 150 L932.2 125 L935.9 90 L939.6 64.7 L943.3 64.7 L947.0 110 L950.8 103 L954.5 85 L958.2 65.3 L961.9 94 L965.6 180 L969.3 151 L973.1 158 L976.8 197 L980.5 152 L984.2 173 L987.9 193 L991.6 165 L995.4 175 L999.1 172 L1002.8 125 L1006.5 71.7 L1010.2 124 L1013.9 112 L1017.7 137.7 L1021.4 137.7 L1025.1 143 L1028.8 85.2 L1032.5 105 L1036.2 139.5 L1040.0 153 L1043.7 156.7 L1047.4 184 L1051.1 125 L1054.8 132 L1058.6 172 L1062.3 131.3 L1066.0 160 L1069.7 186 L1073.4 196 L1077.1 155 L1080.9 118.5 L1084.6 157.6 L1088.3 152 L1092.0 157.6 L1095.7 163 L1099.4 125 L1103.2 150 L1106.9 196.8 L1110.6 187.7 L1114.3 157.6 L1118.0 147.6 L1121.7 125 L1125.5 111.2 L1129.2 137.7 L1132.9 172 L1136.6 151 L1140.3 143 L1144.0 145 L1147.8 165 L1151.5 172 L1155.2 172 L1158.9 178.6 L1162.6 128.5 L1166.3 143 L1170.1 111.2 L1173.8 132.2 L1177.5 151.2 L1181.2 151.2 L1184.9 128.5 L1188.6 105.8 L1192.4 105.8 L1196.1 132.2 L1199.8 105.2 L1203.5 119.4 L1207.2 137.7 L1210.9 191.3 L1214.7 165.8 L1218.4 165.8 L1222.1 200.4 L1225.8 164 L1229.5 185 L1233.3 125 L1237.0 118.5 L1240.7 137.7 L1244.4 91.2 L1248.1 125 L1251.8 112 L1255.6 125 L1259.3 156.7 L1263.0 147.6 L1266.7 130.4 L1270.4 125 L1274.1 165.4 L1277.9 165.4 L1281.6 144 L1285.3 84.8 L1289.0 125 L1292.7 156.7 L1296.4 147.6" fill="none" stroke="#eab839" stroke-width="1.0" stroke-linejoin="round"/>
<path d="M850.4 175 L854.1 172 L857.8 125 L861.6 124 L865.3 85 L869.0 85 L872.7 125 L876.4 165 L880.1 158 L883.9 172 L887.6 150 L891.3 115 L895.0 78.3 L898.7 158 L902.4 158 L906.2 165 L909.9 115 L913.6 85.3 L917.3 145 L921.0 133 L924.7 147 L928.5 157 L932.2 130 L935.9 105 L939.6 90 L943.3 72.1 L947.0 108 L950.8 123 L954.5 95 L958.2 82 L961.9 65.3 L965.6 172 L969.3 155 L973.1 152 L976.8 185 L980.5 158 L984.2 172 L987.9 187 L991.6 168 L995.4 160 L999.1 170 L1002.8 130 L1006.5 84.8 L1010.2 125 L1013.9 114 L1017.7 105.2 L1021.4 119.4 L1025.1 137.7 L1028.8 112 L1032.5 91.2 L1036.2 128.5 L1040.0 150.3 L1043.7 137.7 L1047.4 185 L1051.1 144 L1054.8 131.3 L1058.6 169.5 L1062.3 138.5 L1066.0 145.8 L1069.7 185 L1073.4 184 L1077.1 144 L1080.9 118.5 L1084.6 154.9 L1088.3 150.3 L1092.0 152 L1095.7 158.5 L1099.4 112 L1103.2 78.4 L1106.9 169.5 L1110.6 177.7 L1114.3 156.7 L1118.0 150.3 L1121.7 139.5 L1125.5 137.7 L1129.2 137.7 L1132.9 156.7 L1136.6 128.5 L1140.3 98.5 L1144.0 110.3 L1147.8 160 L1151.5 176.7 L1155.2 177.7 L1158.9 175 L1162.6 118.5 L1166.3 125 L1170.1 131.3 L1173.8 125 L1177.5 137.7 L1181.2 130.4 L1184.9 125 L1188.6 77.5 L1192.4 65.1 L1196.1 106.7 L1199.8 112 L1203.5 98.5 L1207.2 128.5 L1210.9 171.3 L1214.7 171.3 L1218.4 166.7 L1222.1 204 L1225.8 165.8 L1229.5 153 L1233.3 125 L1237.0 98.5 L1240.7 125 L1244.4 84.8 L1248.1 78.4 L1251.8 91.2 L1255.6 85.2 L1259.3 156.7 L1263.0 163 L1266.7 132.2 L1270.4 118.5 L1274.1 137.7 L1277.9 158.5 L1281.6 139.5 L1285.3 98 L1289.0 112 L1292.7 151.2 L1296.4 138.6" fill="none" stroke="#ef843c" stroke-width="1.0" stroke-linejoin="round"/></g>
<rect x="852" y="45" width="1" height="180" fill="#8e0606"/>
<text x="1470" y="55.1" font-size="12" font-weight="700" fill="#33a2e5" textLength="23.5" lengthAdjust="spacingAndGlyphs">max</text>
<text x="1503" y="55.1" font-size="12" font-weight="700" fill="#33a2e5" textLength="38" lengthAdjust="spacingAndGlyphs">current</text>
<path d="M1546 48.6l3.3 3.3l3.3-3.3" fill="none" stroke="#33a2e5" stroke-width="1.3"/>
<rect x="1322" y="74" width="14" height="4" rx="1" fill="#ef843c"/>
<text x="1347.7" y="79.3" font-size="12" fill="#c7d0d9"><tspan fill-opacity="0.3">1</tspan><tspan fill-opacity="0.07">72.16.5.</tspan>99:20180</text>
<text x="1500.5" y="79.3" font-size="12" text-anchor="end" fill="#c7d0d9" textLength="25.4" lengthAdjust="spacingAndGlyphs">0.5%</text>
<text x="1564.5" y="79.3" font-size="12" text-anchor="end" fill="#c7d0d9" textLength="25.4" lengthAdjust="spacingAndGlyphs">0.3%</text>
<rect x="1320" y="88" width="247.5" height="26" fill="#191919"/>
<rect x="1322" y="100" width="14" height="4" rx="1" fill="#7eb26d"/>
<text x="1347.7" y="105.3" font-size="12" fill="#c7d0d9"><tspan fill-opacity="0.3">1</tspan><tspan fill-opacity="0.07">72.16.5.</tspan>108:20180</text>
<text x="1500.5" y="105.3" font-size="12" text-anchor="end" fill="#c7d0d9" textLength="25.4" lengthAdjust="spacingAndGlyphs">0.5%</text>
<text x="1564.5" y="105.3" font-size="12" text-anchor="end" fill="#c7d0d9" textLength="25.4" lengthAdjust="spacingAndGlyphs">0.3%</text>
<rect x="1322" y="126" width="14" height="4" rx="1" fill="#eab839"/>
<text x="1347.7" y="131.3" font-size="12" fill="#c7d0d9"><tspan fill-opacity="0.3">1</tspan><tspan fill-opacity="0.12">72.16.5.</tspan>129:20180</text>
<text x="1500.5" y="131.3" font-size="12" text-anchor="end" fill="#c7d0d9" textLength="25.4" lengthAdjust="spacingAndGlyphs">0.5%</text>
<text x="1564.5" y="131.3" font-size="12" text-anchor="end" fill="#c7d0d9" textLength="25.4" lengthAdjust="spacingAndGlyphs">0.2%</text>
<rect x="1320" y="140" width="247.5" height="26" fill="#191919"/>
<rect x="1322" y="152" width="14" height="4" rx="1" fill="#6ed0e0"/>
<text x="1347.7" y="157.3" font-size="12" fill="#c7d0d9"><tspan fill-opacity="0.3">1</tspan><tspan fill-opacity="0.12">72.16.5.</tspan>188:20180</text>
<text x="1500.5" y="157.3" font-size="12" text-anchor="end" fill="#c7d0d9" textLength="25.4" lengthAdjust="spacingAndGlyphs">0.4%</text>
<text x="1564.5" y="157.3" font-size="12" text-anchor="end" fill="#c7d0d9" textLength="25.4" lengthAdjust="spacingAndGlyphs">0.2%</text>
<path transform="translate(337,276)" d="M6 10.2 L1 5.3 A3.25 3.25 0 0 1 6 1.0 A3.25 3.25 0 0 1 11 5.3 Z" fill="#299c46"/>
<text x="354" y="285.2" font-size="14" font-weight="400" fill="#c7d0d9" textLength="104" lengthAdjust="spacingAndGlyphs" stroke="#c7d0d9" stroke-width="0.3">Store writer CPU</text>
<rect x="60" y="311" width="587" height="17" fill="#2b2021"/>
<rect x="99" y="311" width="1" height="181" fill="#3f4140"/>
<rect x="198" y="311" width="1" height="181" fill="#3f4140"/>
<rect x="297" y="311" width="1" height="181" fill="#3f4140"/>
<rect x="396" y="311" width="1" height="181" fill="#3f4140"/>
<rect x="495" y="311" width="1" height="181" fill="#3f4140"/>
<rect x="594" y="311" width="1" height="181" fill="#3f4140"/>
<rect x="53" y="311" width="594" height="1" fill="#3f4140"/>
<rect x="53" y="356" width="594" height="1" fill="#3f4140"/>
<rect x="53" y="401" width="594" height="1" fill="#3f4140"/>
<rect x="53" y="446" width="594" height="1" fill="#3f4140"/>
<rect x="53" y="491" width="594" height="1" fill="#3f4140"/>
<rect x="60" y="327" width="587" height="2" fill="#c4301f"/>
<text x="47.3" y="314.9" font-size="12" text-anchor="end" fill="#c7d0d9" textLength="29.0" lengthAdjust="spacingAndGlyphs">100%</text>
<text x="47.3" y="359.9" font-size="12" text-anchor="end" fill="#c7d0d9" textLength="22.3" lengthAdjust="spacingAndGlyphs">50%</text>
<text x="47.3" y="404.9" font-size="12" text-anchor="end" fill="#c7d0d9" textLength="15.5" lengthAdjust="spacingAndGlyphs">0%</text>
<text x="47.3" y="449.9" font-size="12" text-anchor="end" fill="#c7d0d9" textLength="25.6" lengthAdjust="spacingAndGlyphs">-50%</text>
<text x="47.3" y="494.9" font-size="12" text-anchor="end" fill="#c7d0d9" textLength="32.3" lengthAdjust="spacingAndGlyphs">-100%</text>
<text x="99.5" y="508.7" font-size="12" text-anchor="middle" fill="#c7d0d9">17:00</text>
<text x="198.5" y="508.7" font-size="12" text-anchor="middle" fill="#c7d0d9">17:10</text>
<text x="297.5" y="508.7" font-size="12" text-anchor="middle" fill="#c7d0d9">17:20</text>
<text x="396.5" y="508.7" font-size="12" text-anchor="middle" fill="#c7d0d9">17:30</text>
<text x="495.5" y="508.7" font-size="12" text-anchor="middle" fill="#c7d0d9">17:40</text>
<text x="594.5" y="508.7" font-size="12" text-anchor="middle" fill="#c7d0d9">17:50</text>
<text x="338.5" y="382.5" font-size="14" text-anchor="middle" fill="#c7d0d9">No data</text>
<text x="678" y="321.1" font-size="12" font-weight="700" fill="#33a2e5" textLength="23.5" lengthAdjust="spacingAndGlyphs">max</text>
<text x="711" y="321.1" font-size="12" font-weight="700" fill="#33a2e5" textLength="38" lengthAdjust="spacingAndGlyphs">current</text>
<path d="M754 314.6l3.3 3.3l3.3-3.3" fill="none" stroke="#33a2e5" stroke-width="1.3"/>
<path transform="translate(1135,276)" d="M6 10.2 L1 5.3 A3.25 3.25 0 0 1 6 1.0 A3.25 3.25 0 0 1 11 5.3 Z" fill="#299c46"/>
<text x="1152.4" y="285.2" font-size="14" font-weight="400" fill="#c7d0d9" textLength="91" lengthAdjust="spacingAndGlyphs" stroke="#c7d0d9" stroke-width="0.3">gRPC poll CPU</text>
<rect x="865" y="311" width="1" height="181" fill="#3f4140"/>
<rect x="943" y="311" width="1" height="181" fill="#3f4140"/>
<rect x="1022" y="311" width="1" height="181" fill="#3f4140"/>
<rect x="1100" y="311" width="1" height="181" fill="#3f4140"/>
<rect x="1179" y="311" width="1" height="181" fill="#3f4140"/>
<rect x="1257" y="311" width="1" height="181" fill="#3f4140"/>
<rect x="828" y="311" width="471" height="1" fill="#3f4140"/>
<rect x="828" y="340" width="471" height="1" fill="#3f4140"/>
<rect x="828" y="370" width="471" height="1" fill="#3f4140"/>
<rect x="828" y="401" width="471" height="1" fill="#3f4140"/>
<rect x="828" y="430" width="471" height="1" fill="#3f4140"/>
<rect x="828" y="461" width="471" height="1" fill="#3f4140"/>
<rect x="828" y="491" width="471" height="1" fill="#3f4140"/>
<text x="822.5" y="314.9" font-size="12" text-anchor="end" fill="#c7d0d9" textLength="15.5" lengthAdjust="spacingAndGlyphs">6%</text>
<text x="822.5" y="343.9" font-size="12" text-anchor="end" fill="#c7d0d9" textLength="15.5" lengthAdjust="spacingAndGlyphs">5%</text>
<text x="822.5" y="373.9" font-size="12" text-anchor="end" fill="#c7d0d9" textLength="15.5" lengthAdjust="spacingAndGlyphs">4%</text>
<text x="822.5" y="404.9" font-size="12" text-anchor="end" fill="#c7d0d9" textLength="15.5" lengthAdjust="spacingAndGlyphs">3%</text>
<text x="822.5" y="433.9" font-size="12" text-anchor="end" fill="#c7d0d9" textLength="15.5" lengthAdjust="spacingAndGlyphs">2%</text>
<text x="822.5" y="464.9" font-size="12" text-anchor="end" fill="#c7d0d9" textLength="15.5" lengthAdjust="spacingAndGlyphs">1%</text>
<text x="822.5" y="494.9" font-size="12" text-anchor="end" fill="#c7d0d9" textLength="15.5" lengthAdjust="spacingAndGlyphs">0%</text>
<text x="865.5" y="508.7" font-size="12" text-anchor="middle" fill="#c7d0d9">17:00</text>
<text x="943.5" y="508.7" font-size="12" text-anchor="middle" fill="#c7d0d9">17:10</text>
<text x="1022.5" y="508.7" font-size="12" text-anchor="middle" fill="#c7d0d9">17:20</text>
<text x="1100.5" y="508.7" font-size="12" text-anchor="middle" fill="#c7d0d9">17:30</text>
<text x="1179.5" y="508.7" font-size="12" text-anchor="middle" fill="#c7d0d9">17:40</text>
<text x="1257.5" y="508.7" font-size="12" text-anchor="middle" fill="#c7d0d9">17:50</text>
<g clip-path="url(#cl4)"><path d="M826.6 432.5 L830.5 445.3 L834.4 434.3 L838.4 426.1 L842.3 432.5 L846.2 438 L850.1 441.6 L854.0 458.9 L857.9 454.4 L861.9 440.7 L865.8 438.9 L869.7 432.5 L873.6 428.9 L877.5 453.5 L881.5 458 L885.4 460.7 L889.3 448 L893.2 456.2 L897.1 460.7 L901.0 454.4 L905.0 449.8 L908.9 443.4 L912.8 438 L916.7 444.3 L920.6 447.1 L924.6 431.6 L928.5 430.7 L932.4 434.3 L936.3 442.5 L940.2 428.9 L944.1 433.4 L948.1 457.1 L952.0 448.9 L955.9 460.7 L959.8 460.2 L963.7 443.4 L967.6 458 L971.6 461.3 L975.5 458.9 L979.4 461.3 L983.3 458.9 L987.2 448 L991.2 438 L995.1 449.8 L999.0 402.4 L1002.9 436.1 L1006.8 446.2 L1010.7 456.2 L1014.7 446.2 L1018.6 444.3 L1022.5 446.2 L1026.4 444.3 L1030.3 457.1 L1034.3 448.9 L1038.2 440.7 L1042.1 443.4 L1046.0 455.3 L1049.9 453.5 L1053.8 454.4 L1057.8 458 L1061.7 456.2 L1065.6 438.9 L1069.5 432.5 L1073.4 450.7 L1077.4 438.9 L1081.3 399.7 L1085.2 448 L1089.1 452.5 L1093.0 445.3 L1096.9 458 L1100.9 457.1 L1104.8 438.9 L1108.7 441.6 L1112.6 447.1 L1116.5 450.7 L1120.5 455.3 L1124.4 456.2 L1128.3 455.3 L1132.2 448 L1136.1 452.5 L1140.0 459.8 L1144.0 457.1 L1147.9 454.4 L1151.8 463.8 L1155.7 458.9 L1159.6 456.2 L1163.5 445.3 L1167.5 427 L1171.4 448.9 L1175.3 447.1 L1179.2 443.4 L1183.1 424.3 L1187.1 428.9 L1191.0 444.3 L1194.9 442.5 L1198.8 436.1 L1202.7 444.3 L1206.6 441.6 L1210.6 437 L1214.5 452.5 L1218.4 461.7 L1222.3 455.3 L1226.2 457.1 L1230.2 456.2 L1234.1 451.6 L1238.0 458.9 L1241.9 444.3 L1245.8 438.9 L1249.7 441.6 L1253.7 447.1 L1257.6 455.3 L1261.5 460.7 L1265.4 450.7 L1269.3 439.8 L1273.3 445.5 L1277.2 454.6 L1281.1 446.5 L1285.0 423.4 L1288.9 418.7 L1292.8 436.5 L1296.8 430 L1296.8 491.5 L826.6 491.5 Z" fill="#6ed0e0" fill-opacity="0.13" stroke="none"/>
<path d="M826.6 421.6 L830.5 418.8 L834.4 415.2 L838.4 432.5 L842.3 428.9 L846.2 417 L850.1 421.6 L854.0 448.9 L857.9 461.7 L861.9 432.5 L865.8 423 L869.7 431.6 L873.6 409.7 L877.5 431.6 L881.5 425.2 L885.4 436.1 L889.3 412.5 L893.2 438 L897.1 439.8 L901.0 428 L905.0 438.9 L908.9 434.3 L912.8 443.4 L916.7 444.3 L920.6 446.2 L924.6 438 L928.5 443.4 L932.4 426.1 L936.3 438.9 L940.2 439.8 L944.1 440.7 L948.1 407 L952.0 403.3 L955.9 456.2 L959.8 459.8 L963.7 445.3 L967.6 458.9 L971.6 449.8 L975.5 439.8 L979.4 437 L983.3 441.6 L987.2 423.4 L991.2 407.3 L995.1 451.6 L999.0 426.1 L1002.9 434.3 L1006.8 438.9 L1010.7 449.8 L1014.7 438.9 L1018.6 429.8 L1022.5 425.2 L1026.4 419.7 L1030.3 440.7 L1034.3 436.1 L1038.2 431.6 L1042.1 423.7 L1046.0 430.7 L1049.9 434.3 L1053.8 451.6 L1057.8 455.3 L1061.7 440.7 L1065.6 428 L1069.5 423.4 L1073.4 440.7 L1077.4 430.7 L1081.3 399.7 L1085.2 419.7 L1089.1 430.7 L1093.0 444.3 L1096.9 456.2 L1100.9 455.3 L1104.8 439.8 L1108.7 436.1 L1112.6 428 L1116.5 436.1 L1120.5 446.2 L1124.4 447.1 L1128.3 447.1 L1132.2 445.3 L1136.1 448 L1140.0 456.2 L1144.0 455.3 L1147.9 448 L1151.8 451.6 L1155.7 452.5 L1159.6 442.5 L1163.5 430.7 L1167.5 415.2 L1171.4 438 L1175.3 448 L1179.2 436.1 L1183.1 409.2 L1187.1 430.7 L1191.0 446.2 L1194.9 434.3 L1198.8 434.3 L1202.7 438.9 L1206.6 440.7 L1210.6 436.1 L1214.5 436.1 L1218.4 454.4 L1222.3 448.9 L1226.2 443.4 L1230.2 426.1 L1234.1 438 L1238.0 445.3 L1241.9 428.9 L1245.8 425.2 L1249.7 432.5 L1253.7 441.6 L1257.6 449.8 L1261.5 448.9 L1265.4 438 L1269.3 429.8 L1273.3 437.5 L1277.2 442.5 L1281.1 428.4 L1285.0 388.5 L1288.9 412.3 L1292.8 434.5 L1296.8 435.5 L1296.8 491.5 L826.6 491.5 Z" fill="#7eb26d" fill-opacity="0.07" stroke="none"/>
<path d="M826.6 421.6 L830.5 426.1 L834.4 429.8 L838.4 431.6 L842.3 427 L846.2 426.1 L850.1 437 L854.0 438 L857.9 445.3 L861.9 446.2 L865.8 444.3 L869.7 430.7 L873.6 412.5 L877.5 430.7 L881.5 442.5 L885.4 434.3 L889.3 420.7 L893.2 429.8 L897.1 438 L901.0 428.9 L905.0 440.7 L908.9 436.1 L912.8 431.6 L916.7 429.8 L920.6 426.1 L924.6 425.2 L928.5 422.5 L932.4 419.7 L936.3 428 L940.2 428.9 L944.1 436.1 L948.1 442.5 L952.0 432.9 L955.9 440.7 L959.8 441.6 L963.7 429.8 L967.6 437 L971.6 436.1 L975.5 434.3 L979.4 436.1 L983.3 444.3 L987.2 426.1 L991.2 425.2 L995.1 436.1 L999.0 423.4 L1002.9 429.8 L1006.8 434.3 L1010.7 442.5 L1014.7 426.1 L1018.6 424.3 L1022.5 430.7 L1026.4 428 L1030.3 432.5 L1034.3 442.5 L1038.2 438.9 L1042.1 440.7 L1046.0 443.4 L1049.9 437 L1053.8 444.3 L1057.8 448 L1061.7 444.3 L1065.6 436.1 L1069.5 430.7 L1073.4 442.5 L1077.4 428.9 L1081.3 379.6 L1085.2 423.4 L1089.1 429.8 L1093.0 439.8 L1096.9 446.2 L1100.9 441.6 L1104.8 436.1 L1108.7 446.2 L1112.6 438.9 L1116.5 433.4 L1120.5 441.6 L1124.4 446.2 L1128.3 446.2 L1132.2 444.3 L1136.1 446.2 L1140.0 451.6 L1144.0 452.5 L1147.9 442.5 L1151.8 446.2 L1155.7 439.8 L1159.6 434.3 L1163.5 428.9 L1167.5 424.3 L1171.4 439.8 L1175.3 440.7 L1179.2 436.1 L1183.1 438 L1187.1 438 L1191.0 442.5 L1194.9 432.5 L1198.8 429.8 L1202.7 436.1 L1206.6 413.9 L1210.6 414.6 L1214.5 434.3 L1218.4 449.8 L1222.3 444.3 L1226.2 442.5 L1230.2 428 L1234.1 430.7 L1238.0 438 L1241.9 415.2 L1245.8 420.7 L1249.7 428.9 L1253.7 431.6 L1257.6 435.2 L1261.5 433.4 L1265.4 428 L1269.3 423.7 L1273.3 435.5 L1277.2 443.5 L1281.1 426.4 L1285.0 421.4 L1288.9 435.5 L1292.8 396.2 L1296.8 370 L1296.8 491.5 L826.6 491.5 Z" fill="#eab839" fill-opacity="0.105" stroke="none"/>
<path d="M826.6 406 L830.5 398.8 L834.4 398.8 L838.4 397 L842.3 400.6 L846.2 409.7 L850.1 428.9 L854.0 444.3 L857.9 446.2 L861.9 436.1 L865.8 430.7 L869.7 428.9 L873.6 415.2 L877.5 406.6 L881.5 432.5 L885.4 427 L889.3 404.2 L893.2 425.2 L897.1 438.9 L901.0 424.3 L905.0 438 L908.9 428 L912.8 428.9 L916.7 430.7 L920.6 434.3 L924.6 411.5 L928.5 406 L932.4 404.8 L936.3 419.7 L940.2 426.1 L944.1 428.9 L948.1 440.7 L952.0 434.3 L955.9 440.7 L959.8 438.9 L963.7 428 L967.6 436.1 L971.6 435.2 L975.5 435.2 L979.4 438.9 L983.3 445.3 L987.2 425.2 L991.2 413.4 L995.1 428.9 L999.0 416.1 L1002.9 414.3 L1006.8 421.6 L1010.7 430.7 L1014.7 417.9 L1018.6 411.5 L1022.5 411.5 L1026.4 420.7 L1030.3 430.7 L1034.3 441.6 L1038.2 417.9 L1042.1 409.2 L1046.0 430.7 L1049.9 430.7 L1053.8 436.1 L1057.8 442.5 L1061.7 445.3 L1065.6 432.5 L1069.5 421.2 L1073.4 438.9 L1077.4 417.9 L1081.3 319 L1085.2 383 L1089.1 403.3 L1093.0 418.8 L1096.9 435.2 L1100.9 417 L1104.8 398.2 L1108.7 426.1 L1112.6 423.4 L1116.5 430.7 L1120.5 440.7 L1124.4 445.3 L1128.3 445.3 L1132.2 440.7 L1136.1 438.9 L1140.0 451.6 L1144.0 450.7 L1147.9 452.5 L1151.8 447.1 L1155.7 441.6 L1159.6 438 L1163.5 432.5 L1167.5 424.3 L1171.4 435.2 L1175.3 431.6 L1179.2 430.7 L1183.1 430.7 L1187.1 426.1 L1191.0 425.2 L1194.9 430.7 L1198.8 426.1 L1202.7 432.5 L1206.6 399.7 L1210.6 376.9 L1214.5 423.4 L1218.4 437 L1222.3 438.9 L1226.2 439.8 L1230.2 428 L1234.1 427 L1238.0 437 L1241.9 413.4 L1245.8 416.1 L1249.7 424.3 L1253.7 427 L1257.6 435.2 L1261.5 431.6 L1265.4 419.7 L1269.3 406 L1273.3 426.4 L1277.2 435.5 L1281.1 420.4 L1285.0 400.2 L1288.9 397.2 L1292.8 425.4 L1296.8 428.8 L1296.8 491.5 L826.6 491.5 Z" fill="#ef843c" fill-opacity="0.1" stroke="none"/>
<path d="M826.6 421.6 L830.5 418.8 L834.4 415.2 L838.4 432.5 L842.3 428.9 L846.2 417 L850.1 421.6 L854.0 448.9 L857.9 461.7 L861.9 432.5 L865.8 423 L869.7 431.6 L873.6 409.7 L877.5 431.6 L881.5 425.2 L885.4 436.1 L889.3 412.5 L893.2 438 L897.1 439.8 L901.0 428 L905.0 438.9 L908.9 434.3 L912.8 443.4 L916.7 444.3 L920.6 446.2 L924.6 438 L928.5 443.4 L932.4 426.1 L936.3 438.9 L940.2 439.8 L944.1 440.7 L948.1 407 L952.0 403.3 L955.9 456.2 L959.8 459.8 L963.7 445.3 L967.6 458.9 L971.6 449.8 L975.5 439.8 L979.4 437 L983.3 441.6 L987.2 423.4 L991.2 407.3 L995.1 451.6 L999.0 426.1 L1002.9 434.3 L1006.8 438.9 L1010.7 449.8 L1014.7 438.9 L1018.6 429.8 L1022.5 425.2 L1026.4 419.7 L1030.3 440.7 L1034.3 436.1 L1038.2 431.6 L1042.1 423.7 L1046.0 430.7 L1049.9 434.3 L1053.8 451.6 L1057.8 455.3 L1061.7 440.7 L1065.6 428 L1069.5 423.4 L1073.4 440.7 L1077.4 430.7 L1081.3 399.7 L1085.2 419.7 L1089.1 430.7 L1093.0 444.3 L1096.9 456.2 L1100.9 455.3 L1104.8 439.8 L1108.7 436.1 L1112.6 428 L1116.5 436.1 L1120.5 446.2 L1124.4 447.1 L1128.3 447.1 L1132.2 445.3 L1136.1 448 L1140.0 456.2 L1144.0 455.3 L1147.9 448 L1151.8 451.6 L1155.7 452.5 L1159.6 442.5 L1163.5 430.7 L1167.5 415.2 L1171.4 438 L1175.3 448 L1179.2 436.1 L1183.1 409.2 L1187.1 430.7 L1191.0 446.2 L1194.9 434.3 L1198.8 434.3 L1202.7 438.9 L1206.6 440.7 L1210.6 436.1 L1214.5 436.1 L1218.4 454.4 L1222.3 448.9 L1226.2 443.4 L1230.2 426.1 L1234.1 438 L1238.0 445.3 L1241.9 428.9 L1245.8 425.2 L1249.7 432.5 L1253.7 441.6 L1257.6 449.8 L1261.5 448.9 L1265.4 438 L1269.3 429.8 L1273.3 437.5 L1277.2 442.5 L1281.1 428.4 L1285.0 388.5 L1288.9 412.3 L1292.8 434.5 L1296.8 435.5" fill="none" stroke="#7eb26d" stroke-width="1.0" stroke-linejoin="round"/>
<path d="M826.6 432.5 L830.5 445.3 L834.4 434.3 L838.4 426.1 L842.3 432.5 L846.2 438 L850.1 441.6 L854.0 458.9 L857.9 454.4 L861.9 440.7 L865.8 438.9 L869.7 432.5 L873.6 428.9 L877.5 453.5 L881.5 458 L885.4 460.7 L889.3 448 L893.2 456.2 L897.1 460.7 L901.0 454.4 L905.0 449.8 L908.9 443.4 L912.8 438 L916.7 444.3 L920.6 447.1 L924.6 431.6 L928.5 430.7 L932.4 434.3 L936.3 442.5 L940.2 428.9 L944.1 433.4 L948.1 457.1 L952.0 448.9 L955.9 460.7 L959.8 460.2 L963.7 443.4 L967.6 458 L971.6 461.3 L975.5 458.9 L979.4 461.3 L983.3 458.9 L987.2 448 L991.2 438 L995.1 449.8 L999.0 402.4 L1002.9 436.1 L1006.8 446.2 L1010.7 456.2 L1014.7 446.2 L1018.6 444.3 L1022.5 446.2 L1026.4 444.3 L1030.3 457.1 L1034.3 448.9 L1038.2 440.7 L1042.1 443.4 L1046.0 455.3 L1049.9 453.5 L1053.8 454.4 L1057.8 458 L1061.7 456.2 L1065.6 438.9 L1069.5 432.5 L1073.4 450.7 L1077.4 438.9 L1081.3 399.7 L1085.2 448 L1089.1 452.5 L1093.0 445.3 L1096.9 458 L1100.9 457.1 L1104.8 438.9 L1108.7 441.6 L1112.6 447.1 L1116.5 450.7 L1120.5 455.3 L1124.4 456.2 L1128.3 455.3 L1132.2 448 L1136.1 452.5 L1140.0 459.8 L1144.0 457.1 L1147.9 454.4 L1151.8 463.8 L1155.7 458.9 L1159.6 456.2 L1163.5 445.3 L1167.5 427 L1171.4 448.9 L1175.3 447.1 L1179.2 443.4 L1183.1 424.3 L1187.1 428.9 L1191.0 444.3 L1194.9 442.5 L1198.8 436.1 L1202.7 444.3 L1206.6 441.6 L1210.6 437 L1214.5 452.5 L1218.4 461.7 L1222.3 455.3 L1226.2 457.1 L1230.2 456.2 L1234.1 451.6 L1238.0 458.9 L1241.9 444.3 L1245.8 438.9 L1249.7 441.6 L1253.7 447.1 L1257.6 455.3 L1261.5 460.7 L1265.4 450.7 L1269.3 439.8 L1273.3 445.5 L1277.2 454.6 L1281.1 446.5 L1285.0 423.4 L1288.9 418.7 L1292.8 436.5 L1296.8 430" fill="none" stroke="#6ed0e0" stroke-width="1.0" stroke-linejoin="round"/>
<path d="M826.6 421.6 L830.5 426.1 L834.4 429.8 L838.4 431.6 L842.3 427 L846.2 426.1 L850.1 437 L854.0 438 L857.9 445.3 L861.9 446.2 L865.8 444.3 L869.7 430.7 L873.6 412.5 L877.5 430.7 L881.5 442.5 L885.4 434.3 L889.3 420.7 L893.2 429.8 L897.1 438 L901.0 428.9 L905.0 440.7 L908.9 436.1 L912.8 431.6 L916.7 429.8 L920.6 426.1 L924.6 425.2 L928.5 422.5 L932.4 419.7 L936.3 428 L940.2 428.9 L944.1 436.1 L948.1 442.5 L952.0 432.9 L955.9 440.7 L959.8 441.6 L963.7 429.8 L967.6 437 L971.6 436.1 L975.5 434.3 L979.4 436.1 L983.3 444.3 L987.2 426.1 L991.2 425.2 L995.1 436.1 L999.0 423.4 L1002.9 429.8 L1006.8 434.3 L1010.7 442.5 L1014.7 426.1 L1018.6 424.3 L1022.5 430.7 L1026.4 428 L1030.3 432.5 L1034.3 442.5 L1038.2 438.9 L1042.1 440.7 L1046.0 443.4 L1049.9 437 L1053.8 444.3 L1057.8 448 L1061.7 444.3 L1065.6 436.1 L1069.5 430.7 L1073.4 442.5 L1077.4 428.9 L1081.3 379.6 L1085.2 423.4 L1089.1 429.8 L1093.0 439.8 L1096.9 446.2 L1100.9 441.6 L1104.8 436.1 L1108.7 446.2 L1112.6 438.9 L1116.5 433.4 L1120.5 441.6 L1124.4 446.2 L1128.3 446.2 L1132.2 444.3 L1136.1 446.2 L1140.0 451.6 L1144.0 452.5 L1147.9 442.5 L1151.8 446.2 L1155.7 439.8 L1159.6 434.3 L1163.5 428.9 L1167.5 424.3 L1171.4 439.8 L1175.3 440.7 L1179.2 436.1 L1183.1 438 L1187.1 438 L1191.0 442.5 L1194.9 432.5 L1198.8 429.8 L1202.7 436.1 L1206.6 413.9 L1210.6 414.6 L1214.5 434.3 L1218.4 449.8 L1222.3 444.3 L1226.2 442.5 L1230.2 428 L1234.1 430.7 L1238.0 438 L1241.9 415.2 L1245.8 420.7 L1249.7 428.9 L1253.7 431.6 L1257.6 435.2 L1261.5 433.4 L1265.4 428 L1269.3 423.7 L1273.3 435.5 L1277.2 443.5 L1281.1 426.4 L1285.0 421.4 L1288.9 435.5 L1292.8 396.2 L1296.8 370" fill="none" stroke="#eab839" stroke-width="1.0" stroke-linejoin="round"/>
<path d="M826.6 406 L830.5 398.8 L834.4 398.8 L838.4 397 L842.3 400.6 L846.2 409.7 L850.1 428.9 L854.0 444.3 L857.9 446.2 L861.9 436.1 L865.8 430.7 L869.7 428.9 L873.6 415.2 L877.5 406.6 L881.5 432.5 L885.4 427 L889.3 404.2 L893.2 425.2 L897.1 438.9 L901.0 424.3 L905.0 438 L908.9 428 L912.8 428.9 L916.7 430.7 L920.6 434.3 L924.6 411.5 L928.5 406 L932.4 404.8 L936.3 419.7 L940.2 426.1 L944.1 428.9 L948.1 440.7 L952.0 434.3 L955.9 440.7 L959.8 438.9 L963.7 428 L967.6 436.1 L971.6 435.2 L975.5 435.2 L979.4 438.9 L983.3 445.3 L987.2 425.2 L991.2 413.4 L995.1 428.9 L999.0 416.1 L1002.9 414.3 L1006.8 421.6 L1010.7 430.7 L1014.7 417.9 L1018.6 411.5 L1022.5 411.5 L1026.4 420.7 L1030.3 430.7 L1034.3 441.6 L1038.2 417.9 L1042.1 409.2 L1046.0 430.7 L1049.9 430.7 L1053.8 436.1 L1057.8 442.5 L1061.7 445.3 L1065.6 432.5 L1069.5 421.2 L1073.4 438.9 L1077.4 417.9 L1081.3 319 L1085.2 383 L1089.1 403.3 L1093.0 418.8 L1096.9 435.2 L1100.9 417 L1104.8 398.2 L1108.7 426.1 L1112.6 423.4 L1116.5 430.7 L1120.5 440.7 L1124.4 445.3 L1128.3 445.3 L1132.2 440.7 L1136.1 438.9 L1140.0 451.6 L1144.0 450.7 L1147.9 452.5 L1151.8 447.1 L1155.7 441.6 L1159.6 438 L1163.5 432.5 L1167.5 424.3 L1171.4 435.2 L1175.3 431.6 L1179.2 430.7 L1183.1 430.7 L1187.1 426.1 L1191.0 425.2 L1194.9 430.7 L1198.8 426.1 L1202.7 432.5 L1206.6 399.7 L1210.6 376.9 L1214.5 423.4 L1218.4 437 L1222.3 438.9 L1226.2 439.8 L1230.2 428 L1234.1 427 L1238.0 437 L1241.9 413.4 L1245.8 416.1 L1249.7 424.3 L1253.7 427 L1257.6 435.2 L1261.5 431.6 L1265.4 419.7 L1269.3 406 L1273.3 426.4 L1277.2 435.5 L1281.1 420.4 L1285.0 400.2 L1288.9 397.2 L1292.8 425.4 L1296.8 428.8" fill="none" stroke="#ef843c" stroke-width="1.0" stroke-linejoin="round"/></g>
<text x="1470" y="321.1" font-size="12" font-weight="700" fill="#33a2e5" textLength="23.5" lengthAdjust="spacingAndGlyphs">max</text>
<text x="1503" y="321.1" font-size="12" font-weight="700" fill="#33a2e5" textLength="38" lengthAdjust="spacingAndGlyphs">current</text>
<path d="M1546 314.6l3.3 3.3l3.3-3.3" fill="none" stroke="#33a2e5" stroke-width="1.3"/>
<rect x="1322" y="340" width="14" height="4" rx="1" fill="#eab839"/>
<text x="1347.7" y="345.3" font-size="12" fill="#c7d0d9"><tspan fill-opacity="0.3">1</tspan><tspan fill-opacity="0.2">72.16.5.</tspan>129:20180</text>
<text x="1500.5" y="345.3" font-size="12" text-anchor="end" fill="#c7d0d9" textLength="25.4" lengthAdjust="spacingAndGlyphs">4.0%</text>
<text x="1564.5" y="345.3" font-size="12" text-anchor="end" fill="#c7d0d9" textLength="25.4" lengthAdjust="spacingAndGlyphs">4.0%</text>
<rect x="1320" y="354" width="247.5" height="26" fill="#191919"/>
<rect x="1322" y="366" width="14" height="4" rx="1" fill="#ef843c"/>
<text x="1347.7" y="371.3" font-size="12" fill="#c7d0d9"><tspan fill-opacity="0.3">1</tspan><tspan fill-opacity="0.09">72.16.5.</tspan>99:20180</text>
<text x="1500.5" y="371.3" font-size="12" text-anchor="end" fill="#c7d0d9" textLength="25.4" lengthAdjust="spacingAndGlyphs">5.7%</text>
<text x="1564.5" y="371.3" font-size="12" text-anchor="end" fill="#c7d0d9" textLength="25.4" lengthAdjust="spacingAndGlyphs">2.1%</text>
<rect x="1322" y="392" width="14" height="4" rx="1" fill="#6ed0e0"/>
<text x="1347.7" y="397.3" font-size="12" fill="#c7d0d9"><tspan fill-opacity="0.3">1</tspan><tspan fill-opacity="0.09">72.16.5.</tspan>188:20180</text>
<text x="1500.5" y="397.3" font-size="12" text-anchor="end" fill="#c7d0d9" textLength="25.4" lengthAdjust="spacingAndGlyphs">3.0%</text>
<text x="1564.5" y="397.3" font-size="12" text-anchor="end" fill="#c7d0d9" textLength="25.4" lengthAdjust="spacingAndGlyphs">2.0%</text>
<rect x="1320" y="406" width="247.5" height="26" fill="#191919"/>
<rect x="1322" y="418" width="14" height="4" rx="1" fill="#7eb26d"/>
<text x="1347.7" y="423.3" font-size="12" fill="#c7d0d9"><tspan fill-opacity="0.3">1</tspan><tspan fill-opacity="0.12">72.16.5.1</tspan>08:20180</text>
<text x="1500.5" y="423.3" font-size="12" text-anchor="end" fill="#c7d0d9" textLength="25.4" lengthAdjust="spacingAndGlyphs">3.4%</text>
<text x="1564.5" y="423.3" font-size="12" text-anchor="end" fill="#c7d0d9" textLength="25.4" lengthAdjust="spacingAndGlyphs">1.8%</text>
<rect x="560.4" y="71.6" width="7.4" height="3.8" fill="#e2e3e6" fill-opacity="1"/>
<rect x="560.4" y="71.6" width="3.8" height="7.6" fill="#e2e3e6" fill-opacity="1"/>
<rect x="573" y="72" width="3.8" height="3.7" fill="#e2e3e6" fill-opacity="1"/>
<rect x="581" y="72" width="3.8" height="3.7" fill="#e2e3e6" fill-opacity="1"/>
<rect x="589" y="72" width="3.8" height="3.7" fill="#e2e3e6" fill-opacity="1"/>
<rect x="564.5" y="83.6" width="3.8" height="3.7" fill="#e2e3e6" fill-opacity="1"/>
<rect x="573" y="83.6" width="3.8" height="3.7" fill="#e2e3e6" fill-opacity="1"/>
<rect x="581" y="83.6" width="3.8" height="3.7" fill="#e2e3e6" fill-opacity="1"/>
<rect x="589" y="83.6" width="3.8" height="3.7" fill="#e2e3e6" fill-opacity="1"/>
<rect x="560.4" y="97.6" width="7.4" height="3.8" fill="#e2e3e6" fill-opacity="1"/>
<rect x="560.4" y="97.6" width="3.8" height="7.6" fill="#e2e3e6" fill-opacity="1"/>
<rect x="572" y="98" width="3.8" height="3.7" fill="#e2e3e6" fill-opacity="1"/>
<rect x="580.4" y="98" width="3.8" height="3.7" fill="#e2e3e6" fill-opacity="1"/>
<rect x="588.6" y="98" width="3.8" height="3.7" fill="#e2e3e6" fill-opacity="1"/>
<rect x="564.3" y="109.6" width="3.8" height="3.7" fill="#e2e3e6" fill-opacity="1"/>
<rect x="580" y="109.6" width="3.8" height="3.7" fill="#e2e3e6" fill-opacity="1"/>
<rect x="589" y="109.6" width="3.8" height="3.7" fill="#e2e3e6" fill-opacity="1"/>
<rect x="560.4" y="123.6" width="3.8" height="7.6" fill="#e2e3e6" fill-opacity="1"/>
<rect x="560.4" y="127.4" width="7.6" height="3.8" fill="#e2e3e6" fill-opacity="1"/>
<rect x="572.8" y="127.4" width="3.8" height="3.8" fill="#e2e3e6" fill-opacity="1"/>
<rect x="564.7" y="135.6" width="3.8" height="3.7" fill="#e2e3e6" fill-opacity="1"/>
<rect x="560.4" y="149.6" width="3.8" height="7.6" fill="#e2e3e6" fill-opacity="1"/>
<rect x="560.4" y="153.4" width="7.6" height="3.8" fill="#e2e3e6" fill-opacity="1"/>
<rect x="572.8" y="148.6" width="3.8" height="6.4" fill="#e2e3e6" fill-opacity="1"/>
<rect x="564.7" y="161.6" width="3.8" height="3.7" fill="#e2e3e6" fill-opacity="1"/>
<rect x="572.8" y="161.6" width="3.8" height="3.7" fill="#e2e3e6" fill-opacity="1"/>
<rect x="1352.4" y="71.6" width="7.4" height="3.8" fill="#e2e3e6" fill-opacity="1"/>
<rect x="1352.4" y="71.6" width="3.8" height="7.6" fill="#e2e3e6" fill-opacity="1"/>
<rect x="1365" y="72" width="3.8" height="3.7" fill="#e2e3e6" fill-opacity="1"/>
<rect x="1373" y="72" width="3.8" height="3.7" fill="#e2e3e6" fill-opacity="1"/>
<rect x="1381" y="72" width="3.8" height="3.7" fill="#e2e3e6" fill-opacity="1"/>
<rect x="1389" y="72" width="3.8" height="3.7" fill="#e2e3e6" fill-opacity="1"/>
<rect x="1356.8" y="83.6" width="3.8" height="3.7" fill="#e2e3e6" fill-opacity="1"/>
<rect x="1365" y="83.6" width="3.8" height="3.7" fill="#e2e3e6" fill-opacity="1"/>
<rect x="1373" y="83.6" width="3.8" height="3.7" fill="#e2e3e6" fill-opacity="1"/>
<rect x="1381" y="83.6" width="3.8" height="3.7" fill="#e2e3e6" fill-opacity="1"/>
<rect x="1389" y="83.6" width="3.8" height="3.7" fill="#e2e3e6" fill-opacity="1"/>
<rect x="1352.4" y="97.6" width="7.4" height="3.8" fill="#e2e3e6" fill-opacity="1"/>
<rect x="1352.4" y="97.6" width="3.8" height="7.6" fill="#e2e3e6" fill-opacity="1"/>
<rect x="1365" y="98" width="3.8" height="3.7" fill="#e2e3e6" fill-opacity="1"/>
<rect x="1373" y="98" width="3.8" height="3.7" fill="#e2e3e6" fill-opacity="1"/>
<rect x="1381" y="98" width="3.8" height="3.7" fill="#e2e3e6" fill-opacity="1"/>
<rect x="1356.8" y="109.6" width="3.8" height="3.7" fill="#e2e3e6" fill-opacity="1"/>
<rect x="1365" y="109.6" width="3.8" height="3.7" fill="#e2e3e6" fill-opacity="1"/>
<rect x="1373" y="109.6" width="3.8" height="3.7" fill="#e2e3e6" fill-opacity="1"/>
<rect x="1381" y="109.6" width="3.8" height="3.7" fill="#e2e3e6" fill-opacity="1"/>
<rect x="1352.4" y="123.6" width="3.8" height="7.6" fill="#e2e3e6" fill-opacity="1"/>
<rect x="1352.4" y="127.4" width="7.6" height="3.8" fill="#e2e3e6" fill-opacity="1"/>
<rect x="1365" y="127.4" width="3.8" height="3.8" fill="#e2e3e6" fill-opacity="1"/>
<rect x="1356.8" y="135.6" width="3.8" height="3.7" fill="#e2e3e6" fill-opacity="1"/>
<rect x="1365" y="135.6" width="3.8" height="3.7" fill="#e2e3e6" fill-opacity="1"/>
<rect x="1352.4" y="149.6" width="3.8" height="7.6" fill="#e2e3e6" fill-opacity="1"/>
<rect x="1352.4" y="153.4" width="7.6" height="3.8" fill="#e2e3e6" fill-opacity="1"/>
<rect x="1365.6" y="151" width="2.6" height="3" fill="#e2e3e6" fill-opacity="1"/>
<rect x="1365" y="161.6" width="3.8" height="3.7" fill="#e2e3e6" fill-opacity="1"/>
<rect x="1352.6" y="335.5" width="5.6" height="8.5" fill="#e2e3e6" fill-opacity="1"/>
<rect x="1373" y="335.5" width="3.8" height="3.7" fill="#e2e3e6" fill-opacity="1"/>
<rect x="1381" y="335.5" width="3.8" height="3.7" fill="#e2e3e6" fill-opacity="1"/>
<rect x="1356.8" y="349.6" width="3.8" height="3.7" fill="#e2e3e6" fill-opacity="1"/>
<rect x="1365" y="349.6" width="3.8" height="3.7" fill="#e2e3e6" fill-opacity="1"/>
<rect x="1373" y="349.6" width="3.8" height="3.7" fill="#e2e3e6" fill-opacity="1"/>
<rect x="1381" y="349.6" width="3.8" height="3.7" fill="#e2e3e6" fill-opacity="1"/>
<rect x="1352.4" y="363.6" width="3.8" height="7.6" fill="#e2e3e6" fill-opacity="1"/>
<rect x="1352.4" y="367.4" width="7.6" height="3.8" fill="#e2e3e6" fill-opacity="1"/>
<rect x="1365" y="367.4" width="3.8" height="3.8" fill="#e2e3e6" fill-opacity="1"/>
<rect x="1356.8" y="375.6" width="3.8" height="3.7" fill="#e2e3e6" fill-opacity="1"/>
<rect x="1365" y="375.6" width="3.8" height="3.7" fill="#e2e3e6" fill-opacity="1"/>
<rect x="1352.4" y="389.6" width="3.8" height="7.6" fill="#e2e3e6" fill-opacity="1"/>
<rect x="1352.4" y="393.4" width="7.6" height="3.8" fill="#e2e3e6" fill-opacity="1"/>
<rect x="1365" y="393.4" width="3.8" height="3.8" fill="#e2e3e6" fill-opacity="1"/>
<rect x="1356.8" y="401.6" width="3.8" height="3.7" fill="#e2e3e6" fill-opacity="1"/>
<rect x="1365" y="401.6" width="3.8" height="3.7" fill="#e2e3e6" fill-opacity="1"/>
<rect x="1352.4" y="415.6" width="7.4" height="3.8" fill="#e2e3e6" fill-opacity="1"/>
<rect x="1352.4" y="415.6" width="3.8" height="7.6" fill="#e2e3e6" fill-opacity="1"/>
<rect x="1365" y="415.7" width="3.8" height="3.7" fill="#e2e3e6" fill-opacity="1"/>
<rect x="1373" y="415.7" width="3.8" height="3.7" fill="#e2e3e6" fill-opacity="1"/>
<rect x="1381" y="415.7" width="3.8" height="3.7" fill="#e2e3e6" fill-opacity="1"/>
<rect x="1389" y="415.7" width="3.8" height="3.7" fill="#e2e3e6" fill-opacity="1"/>
<rect x="1356.8" y="427.6" width="3.8" height="3.7" fill="#e2e3e6" fill-opacity="1"/>
<rect x="1365" y="427.6" width="3.8" height="3.7" fill="#e2e3e6" fill-opacity="1"/>
<rect x="1373" y="427.6" width="3.8" height="3.7" fill="#e2e3e6" fill-opacity="1"/>
<rect x="1381" y="427.6" width="3.8" height="3.7" fill="#e2e3e6" fill-opacity="1"/>
<rect x="1389" y="427.6" width="3.8" height="3.7" fill="#e2e3e6" fill-opacity="1"/>
<rect x="27.5" y="218.3" width="189" height="109" rx="3" fill="#111514"/>
<text x="122" y="238.2" font-size="12" font-weight="700" text-anchor="middle" fill="#d8d9da" textLength="114.5" lengthAdjust="spacingAndGlyphs">2021-09-06 16:55:00</text>
<rect x="38.8" y="253.6" width="5" height="3.2" fill="#7eb26d"/>
<text x="163.5" y="259.5" font-size="12" text-anchor="end" fill="#d8d9da"><tspan fill-opacity="0.08">172.16.5.1</tspan>08:20180:</text>
<text x="206.5" y="259.5" font-size="12" font-weight="700" text-anchor="end" fill="#d8d9da" textLength="25.5" lengthAdjust="spacingAndGlyphs">0.8%</text>
<rect x="38.8" y="271.0" width="9.5" height="3.2" fill="#eab839"/>
<text x="163.5" y="276.90000000000003" font-size="12" text-anchor="end" fill="#d8d9da"><tspan fill-opacity="0.08">172.16.5.12</tspan>9:20180:</text>
<text x="206.5" y="276.90000000000003" font-size="12" font-weight="700" text-anchor="end" fill="#d8d9da" textLength="25.5" lengthAdjust="spacingAndGlyphs">1.2%</text>
<rect x="38.8" y="289.0" width="9.5" height="3.2" fill="#6ed0e0"/>
<text x="163.5" y="294.90000000000003" font-size="12" text-anchor="end" fill="#d8d9da"><tspan fill-opacity="0.08">172.16.5.18</tspan>8:20180:</text>
<text x="206.5" y="294.90000000000003" font-size="12" font-weight="700" text-anchor="end" fill="#d8d9da" textLength="25.5" lengthAdjust="spacingAndGlyphs">0.3%</text>
<rect x="38.8" y="307.29999999999995" width="9.5" height="3.2" fill="#ef843c"/>
<text x="156.8" y="313.2" font-size="12" text-anchor="end" fill="#d8d9da"><tspan fill-opacity="0.08">172.16.5.9</tspan>9:20180:</text>
<text x="206.5" y="313.2" font-size="12" font-weight="700" text-anchor="end" fill="#d8d9da" textLength="25.5" lengthAdjust="spacingAndGlyphs">1.0%</text>
<rect x="88.2" y="230.3" width="3.4" height="8" fill="#c9ccd0" fill-opacity="1"/>
<rect x="100.6" y="243.3" width="3.4" height="3.6" fill="#d9dce2" fill-opacity="1"/>
<text x="76.3" y="259.5" font-size="12" fill="#d8d9da" fill-opacity="0.75">8</text>
<rect x="52.7" y="254.7" width="3.6" height="3.3" fill="#d9dce2" fill-opacity="1"/><rect x="60.8" y="255.4" width="3.4" height="2.6" fill="#d9dce2" fill-opacity="1"/><rect x="83" y="255.4" width="9.8" height="2.6" fill="#d9dce2" fill-opacity="1"/><rect x="108.3" y="254.3" width="5.5" height="3.7" fill="#d9dce2" fill-opacity="1"/>
<rect x="52.7" y="268" width="3.2" height="6.6" fill="#d9dce2" fill-opacity="1"/><rect x="84.5" y="268" width="3.6" height="7" fill="#d9dce2" fill-opacity="1"/><rect x="84.5" y="271.6" width="7.2" height="3.4" fill="#d9dce2" fill-opacity="1"/><rect x="108.3" y="268" width="5.5" height="3.3" fill="#d9dce2" fill-opacity="1"/>
<rect x="52.7" y="283.9" width="3.2" height="7.3" fill="#d9dce2" fill-opacity="1"/><rect x="84.5" y="283.9" width="3.6" height="7.3" fill="#d9dce2" fill-opacity="1"/><rect x="88.4" y="288.6" width="3.6" height="2.8" fill="#d9dce2" fill-opacity="1"/><rect x="92" y="287" width="3.6" height="3" fill="#d9dce2" fill-opacity="1"/><rect x="88.9" y="291.8" width="3.5" height="3.2" fill="#d9dce2" fill-opacity="1"/><rect x="108.3" y="289" width="5.5" height="2.8" fill="#d9dce2" fill-opacity="1"/>
<rect x="44.3" y="283.4" width="4" height="3.3" fill="#eab839" fill-opacity="1"/>
<rect x="52.7" y="300" width="3.2" height="6.6" fill="#d9dce2" fill-opacity="1"/><rect x="68.6" y="303.3" width="3.3" height="3.3" fill="#d9dce2" fill-opacity="1"/><rect x="90.2" y="300" width="3" height="5" fill="#d9dce2" fill-opacity="1"/><rect x="93.4" y="303.3" width="3" height="3.3" fill="#d9dce2" fill-opacity="1"/><rect x="96" y="300" width="2.6" height="4" fill="#d9dce2" fill-opacity="1"/><rect x="105" y="303.3" width="3.3" height="3.3" fill="#d9dce2" fill-opacity="1"/><rect x="92.8" y="315.4" width="3.4" height="3.4" fill="#d9dce2" fill-opacity="1"/>
</svg>
</body></html>
